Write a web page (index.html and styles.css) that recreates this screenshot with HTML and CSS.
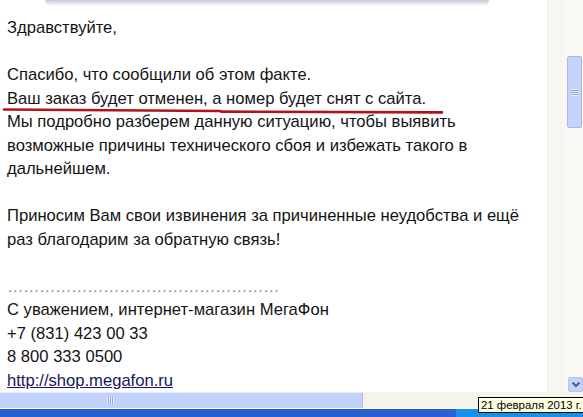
FILE: index.html
```html
<!DOCTYPE html>
<html lang="ru">
<head>
    <meta charset="UTF-8">
    <meta name="viewport" content="width=device-width, initial-scale=1.0">
    <title>Письмо</title>
    <link rel="stylesheet" href="styles.css">
</head>
<body>
    <div class="window">
        <div class="view">
            <div class="page">
                <div class="top-shadow"></div>
                <div class="letter">
                    <p>Здравствуйте,</p>
                    <p>Спасибо, что сообщили об этом факте.<br>
                    Ваш заказ будет отменен, а номер будет снят с сайта.<br>
                    Мы подробно разберем данную ситуацию, чтобы выявить<br>
                    возможные причины технического сбоя и избежать такого в<br>
                    дальнейшем.</p>
                    <p>Приносим Вам свои извинения за причиненные неудобства и ещё<br>
                    раз благодарим за обратную связь!</p>
                    <p><span class="dots">……………………………………………</span><br>
                    С уважением, интернет-магазин МегаФон<br>
                    +7 (831) 423 00 33<br>
                    8 800 333 0500<br>
                    <a href="#">http://shop.megafon.ru</a></p>
                </div>
                <svg class="mark" width="460" height="20" viewBox="0 0 460 20">
                    <path d="M4 9.5 Q110 10.2 220 11" stroke="#b3121a" stroke-width="2.6" fill="none" stroke-linecap="round"/>
                    <path d="M221 11.6 Q330 12 442 12.4" stroke="#b3121a" stroke-width="2.6" fill="none" stroke-linecap="round"/>
                </svg>
            </div>
            <div class="side-strip"></div>
            <div class="vscroll">
                <div class="vthumb"><span class="grip-v"></span></div>
                <div class="arrow-down">
                    <svg width="10" height="7" viewBox="0 0 10 7">
                        <path d="M1.5 1.5 L5 5 L8.5 1.5" stroke="#4d6185" stroke-width="2" fill="none"/>
                    </svg>
                </div>
            </div>
        </div>
        <div class="hscroll">
            <div class="hthumb"><span class="grip-h"></span></div>
        </div>
        <div class="taskbar">
            <div class="tray"></div>
        </div>
        <div class="tooltip">21 февраля 2013 г.</div>
    </div>
</body>
</html>
```

FILE: styles.css
```css
* {
    box-sizing: border-box;
}
body {
    margin: 0;
    background-color: #fff;
    font-family: "Liberation Sans", Arial, sans-serif;
}
.window {
    position: relative;
    width: 583px;
    height: 417px;
    overflow: hidden;
}
.view {
    display: flex;
    height: 392px;
}
.page {
    position: relative;
    flex: 1;
    background-color: #fff;
}
.top-shadow {
    height: 6px;
    margin: 0 58px 0 45px;
    border-radius: 0 0 8px 8px;
    background: linear-gradient(#c9ccd8, #e6e8ef 60%, #fff);
}
.letter {
    padding: 10px 0 0 7px;
    font-size: 16.6px;
    line-height: 23.5px;
    color: #141414;
    white-space: nowrap;
}
.letter p {
    margin: 0 0 23.5px;
}
.letter a {
    color: #16165a;
}
.dots {
    color: #8a8a8a;
    letter-spacing: -0.6px;
}
.mark {
    position: absolute;
    left: 0;
    top: 100px;
}
.side-strip {
    width: 18px;
    background-color: #f6f6f3;
    border-left: 1px solid #eeeeea;
}
.vscroll {
    position: relative;
    width: 18px;
    background-color: #f9f8f2;
}
.vthumb {
    position: absolute;
    left: 2px;
    top: 56px;
    width: 15px;
    height: 72px;
    background-color: #c4d3fa;
    border: 1px solid #a9b9e6;
    border-radius: 2px;
    display: flex;
    align-items: center;
    justify-content: center;
}
.grip-v {
    width: 7px;
    height: 7px;
    background: repeating-linear-gradient(#eef2fe 0 1px, #8ea2d6 1px 2px);
}
.arrow-down {
    position: absolute;
    left: 3px;
    top: 377px;
    width: 15px;
    height: 15px;
    background-color: #c6d4f8;
    border: 1px solid #b3c3ea;
    border-radius: 2px;
    display: flex;
    align-items: center;
    justify-content: center;
}
.hscroll {
    height: 17px;
    background-color: #f5f4ec;
    border-bottom: 1px solid #fff;
}
.hthumb {
    width: 363px;
    height: 16px;
    background-color: #c1d2fa;
    border-top: 1px solid #e4ebfd;
    border-right: 1px solid #a4b6e4;
    border-radius: 0 2px 2px 0;
    padding-left: 107px;
    display: flex;
    align-items: center;
}
.grip-h {
    width: 7px;
    height: 7px;
    background: repeating-linear-gradient(90deg, #eef2fe 0 1px, #8ea2d6 1px 2px);
}
.taskbar {
    display: flex;
    justify-content: flex-end;
    height: 8px;
    background-color: #2a5fd2;
}
.tray {
    width: 128px;
    background-color: #1591ea;
    border-left: 1px solid #1c6ad8;
}
.tooltip {
    position: absolute;
    left: 478px;
    top: 397px;
    width: 106px;
    height: 16px;
    padding: 0 0 0 2px;
    background-color: #ffffe1;
    border: 1px solid #000;
    font-size: 11.4px;
    line-height: 14px;
    color: #000;
    white-space: nowrap;
}
```
